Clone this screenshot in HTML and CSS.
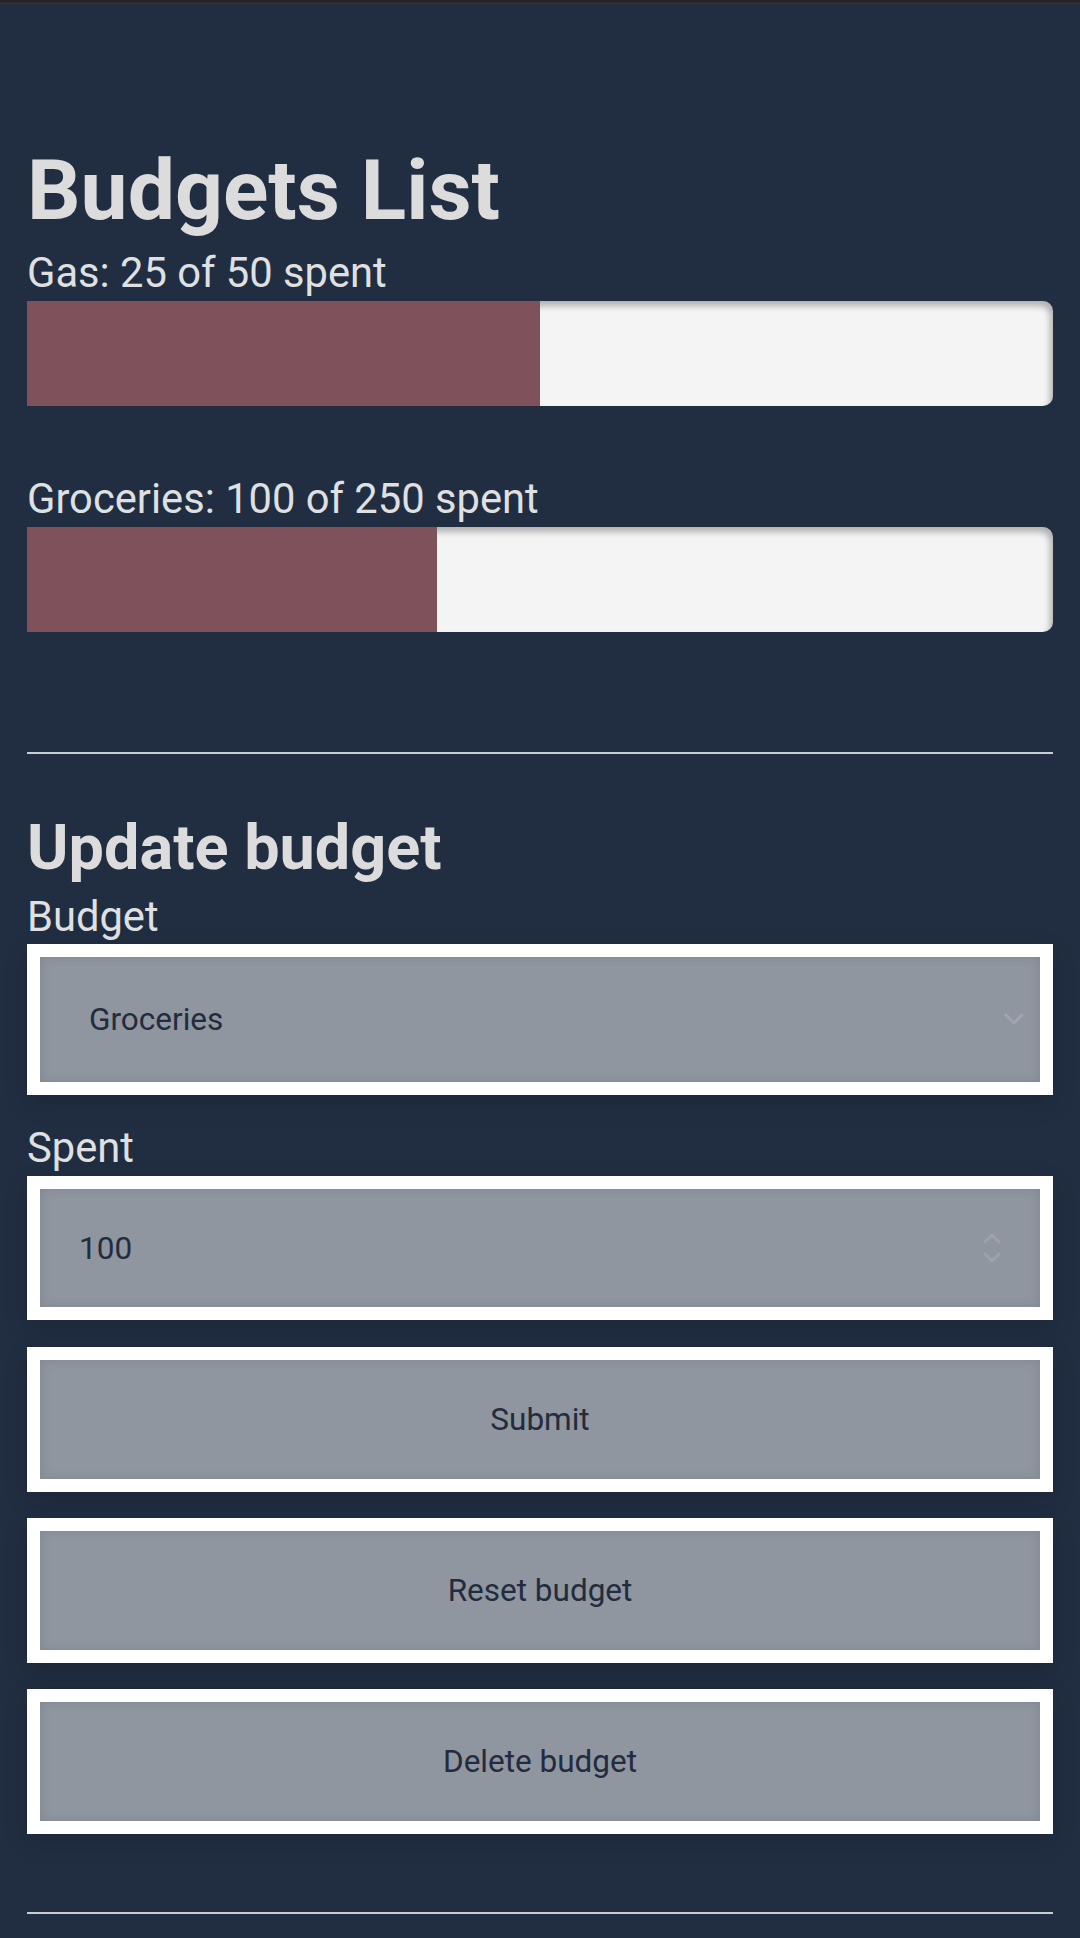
FILE: index.html
```html
<!DOCTYPE html>
<html lang="en">
<head>
<meta charset="utf-8">
<title>Budgets List</title>
<link rel="stylesheet" href="styles.css">
</head>
<body>
<div class="topbar"></div>
<main class="page">
  <h1 class="title">Budgets List</h1>
  <section class="budgets">
    <div class="budget">
      <p class="budget-label">Gas: 25 of 50 spent</p>
      <div class="track"><div class="fill" style="width:50%"></div></div>
    </div>
    <div class="budget">
      <p class="budget-label">Groceries: 100 of 250 spent</p>
      <div class="track"><div class="fill" style="width:40%"></div></div>
    </div>
  </section>
  <hr class="rule rule-top">
  <h2 class="subtitle">Update budget</h2>
  <form class="form">
    <label class="field-label" for="budget">Budget</label>
    <div class="select-wrap">
      <select id="budget" class="control select">
        <option>Groceries</option>
        <option>Gas</option>
      </select>
      <svg class="chevron" viewBox="0 0 20 14" width="20" height="14"><path d="M2 3 L10 11 L18 3" fill="none" stroke="#a3a2b3" stroke-width="3" stroke-linecap="round" stroke-linejoin="round"/></svg>
    </div>
    <label class="field-label field-label-gap" for="spent">Spent</label>
    <div class="number-wrap">
      <input id="spent" class="control number" type="number" value="100">
      <svg class="spinner" viewBox="0 0 20 32" width="20" height="32"><path d="M3 10 L10 3 L17 10" fill="none" stroke="#a09fb0" stroke-width="3" stroke-linecap="round" stroke-linejoin="round"/><path d="M3 22 L10 29 L17 22" fill="none" stroke="#a09fb0" stroke-width="3" stroke-linecap="round" stroke-linejoin="round"/></svg>
    </div>
    <button type="button" class="btn btn-first">Submit</button>
    <button type="button" class="btn">Reset budget</button>
    <button type="button" class="btn">Delete budget</button>
  </form>
  <hr class="rule rule-bottom">
</main>
</body>
</html>
```
FILE: styles.css
```css
html, body {
  margin: 0;
  padding: 0;
  background: #212d41;
}
body {
  font-family: Roboto, "Noto Sans", Arial, sans-serif;
  color: #dcdcdd;
  min-height: 1938px;
}
.topbar {
  height: 2px;
  background: #232324;
  border-bottom: 3px solid #2d2f38;
}
.page {
  padding: 0 27px;
}
.title {
  margin: 136px 0 7px;
  font-size: 84px;
  line-height: 100px;
  font-weight: 700;
  color: #dcdcdc;
}
.budgets {
  display: flex;
  flex-direction: column;
  gap: 68px;
}
.budget-label {
  margin: 0;
  font-size: 41.7px;
  line-height: 49px;
  color: #dfe0e2;
}
.track {
  margin-top: 4px;
  height: 105px;
  background: #f4f4f4;
  border-radius: 0 10px 10px 0;
  box-shadow: inset -3px 5px 6px rgba(0, 0, 0, 0.28);
  overflow: hidden;
}
.fill {
  height: 100%;
  background: #7e515b;
}
.rule {
  border: 0;
  height: 2px;
  margin: 0;
  background: #c9ccd3;
}
.rule-top {
  margin-top: 120px;
}
.subtitle {
  margin: 56px 0 0;
  font-size: 63px;
  line-height: 76px;
  font-weight: 700;
  color: #dcdcdc;
}
.form {
  display: flex;
  flex-direction: column;
}
.field-label {
  display: block;
  margin-top: 6px;
  font-size: 41.7px;
  line-height: 49px;
  color: #dfe0e2;
}
.field-label-gap {
  margin-top: 28px;
}
.select-wrap,
.number-wrap {
  position: relative;
}
.select-wrap {
  margin-top: 3px;
}
.number-wrap {
  margin-top: 4px;
}
.control,
.btn {
  box-sizing: border-box;
  width: 100%;
  margin: 0;
  border: 13px solid #ffffff;
  border-radius: 0;
  background: #8f96a0;
  box-shadow: inset 0 0 12px rgba(0, 0, 0, 0.1), 0 8px 24px rgba(0, 0, 0, 0.12);
  font-family: Roboto, "Noto Sans", Arial, sans-serif;
  font-size: 31.5px;
  color: #222c3e;
  -webkit-appearance: none;
  appearance: none;
  outline: none;
}
.select {
  display: block;
  height: 151px;
  padding: 0 60px 0 49px;
}
.number {
  display: block;
  height: 144px;
  padding: 0 60px 0 39px;
  -moz-appearance: textfield;
}
.number::-webkit-inner-spin-button,
.number::-webkit-outer-spin-button {
  -webkit-appearance: none;
  margin: 0;
}
.chevron {
  position: absolute;
  right: 29px;
  top: 68px;
  pointer-events: none;
}
.spinner {
  position: absolute;
  right: 51px;
  top: 56px;
  pointer-events: none;
}
.btn {
  display: block;
  height: 145px;
  margin-top: 26px;
  text-align: center;
  cursor: pointer;
}
.btn-first {
  margin-top: 27px;
}
.rule-bottom {
  margin-top: 78px;
}
```
